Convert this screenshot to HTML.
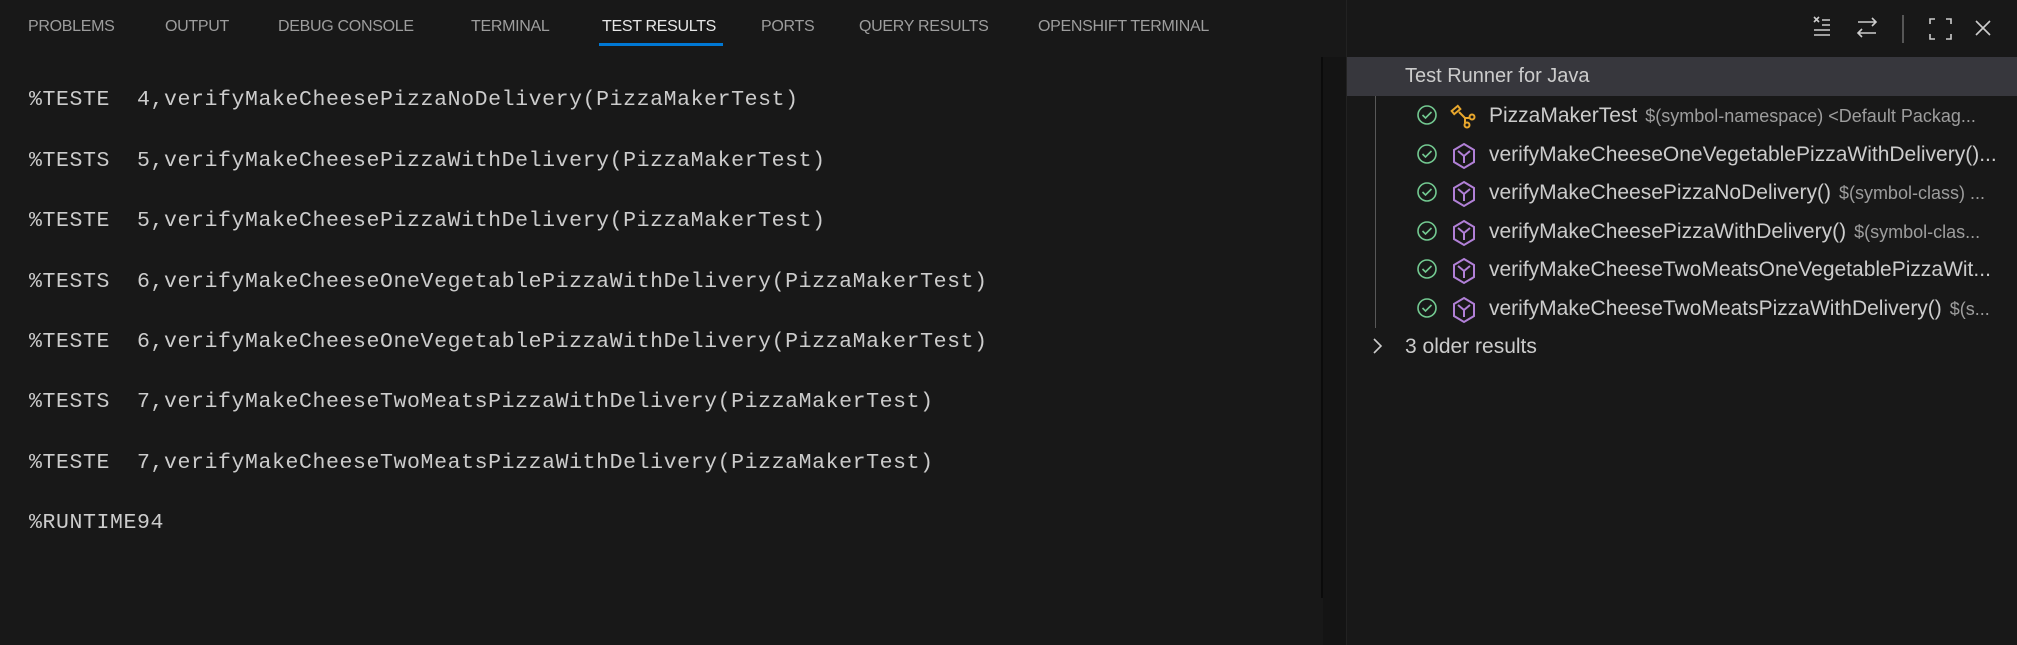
<!DOCTYPE html>
<html><head><meta charset="utf-8"><style>
body{margin:0;width:2017px;height:645px;background:#181818;overflow:hidden;position:relative;font-family:"Liberation Sans",sans-serif}
.tab{position:absolute;top:18px;font-size:16px;color:#9d9d9d;white-space:nowrap;letter-spacing:-0.3px}
.code{position:absolute;left:29px;font-family:"Liberation Mono",monospace;font-size:21.5px;color:#cccccc;white-space:pre;line-height:26px;letter-spacing:0.6px}
.row{position:absolute;left:1346px;right:0;height:38px;font-size:21px;color:#cccccc;white-space:nowrap;overflow:hidden}
.row .t{position:absolute;left:143px;top:8px}
.row .d{color:#9d9d9d;font-size:18px;margin-left:8px}
.row svg{position:absolute;top:7px}
</style></head><body>
<div class="tab" style="left:28px">PROBLEMS</div>
<div class="tab" style="left:165px">OUTPUT</div>
<div class="tab" style="left:278px">DEBUG CONSOLE</div>
<div class="tab" style="left:471px">TERMINAL</div>
<div class="tab" style="left:602px;color:#e7e7e7">TEST RESULTS</div>
<div style="position:absolute;left:599px;top:43px;width:124px;height:3px;background:#0078d4"></div>
<div class="tab" style="left:761px">PORTS</div>
<div class="tab" style="left:859px">QUERY RESULTS</div>
<div class="tab" style="left:1038px">OPENSHIFT TERMINAL</div>

<svg style="position:absolute;left:1808px;top:14px" width="200" height="30" viewBox="0 0 200 30" fill="none" stroke="#cccccc" stroke-width="1.6">
<path d="M6 3l5 5M11 3l-5 5M14 6h8M14 11h8M6 16h16M6 21h16"/>
<path d="M50 8h18M64 4l4 4-4 4M68 19H50M54 15l-4 4 4 4"/>
<path d="M95 1v28" stroke="#666"/>
<path d="M122 10V5h5M138 5h5v5M143 20v5h-5M127 25h-5v-5"/>
<path d="M168 7l14 14M182 7l-14 14"/>
</svg>

<div class="code" style="top:87px">%TESTE  4,verifyMakeCheesePizzaNoDelivery(PizzaMakerTest)</div>
<div class="code" style="top:148px">%TESTS  5,verifyMakeCheesePizzaWithDelivery(PizzaMakerTest)</div>
<div class="code" style="top:208px">%TESTE  5,verifyMakeCheesePizzaWithDelivery(PizzaMakerTest)</div>
<div class="code" style="top:269px">%TESTS  6,verifyMakeCheeseOneVegetablePizzaWithDelivery(PizzaMakerTest)</div>
<div class="code" style="top:329px">%TESTE  6,verifyMakeCheeseOneVegetablePizzaWithDelivery(PizzaMakerTest)</div>
<div class="code" style="top:389px">%TESTS  7,verifyMakeCheeseTwoMeatsPizzaWithDelivery(PizzaMakerTest)</div>
<div class="code" style="top:450px">%TESTE  7,verifyMakeCheeseTwoMeatsPizzaWithDelivery(PizzaMakerTest)</div>
<div class="code" style="top:510px">%RUNTIME94</div>

<div style="position:absolute;left:1321px;top:57px;width:2px;height:541px;background:#0b0b0b"></div>
<div style="position:absolute;left:1323px;top:57px;width:23px;height:588px;background:#141414"></div>
<div style="position:absolute;left:1346px;top:0;width:1px;height:645px;background:#222"></div>
<div style="position:absolute;left:1347px;top:57px;right:0;height:39px;background:#37373d"></div>
<div style="position:absolute;left:1405px;top:65px;font-size:20px;color:#cccccc">Test Runner for Java</div>
<div style="position:absolute;left:1375px;top:96px;width:1px;height:232px;background:#585858"></div>

<div class="row" style="top:96px">
<svg style="left:69px" width="24" height="24" viewBox="0 0 24 24" fill="none" stroke="#73c991" stroke-width="1.6"><circle cx="12" cy="12" r="9"/><path d="M7.5 12l3 3 6-6"/></svg>
<svg style="left:103px" width="30" height="26" viewBox="0 0 30 26" fill="none" stroke="#e8a72d" stroke-width="2"><rect x="3" y="5" width="8" height="4" transform="rotate(-40 7 7)"/><path d="M10 9l6 6h4M16 15v5"/><circle cx="23" cy="14" r="2.5"/><circle cx="18" cy="22" r="2.5"/></svg>
<span class="t">PizzaMakerTest<span class="d">$(symbol-namespace) &lt;Default Packag...</span></span></div>

<div class="row" style="top:135px">
<svg style="left:69px" width="24" height="24" viewBox="0 0 24 24" fill="none" stroke="#73c991" stroke-width="1.6"><circle cx="12" cy="12" r="9"/><path d="M7.5 12l3 3 6-6"/></svg>
<svg style="left:105px" width="26" height="28" viewBox="0 0 26 28" fill="none" stroke="#b180d7" stroke-width="2"><path d="M13 2l10 6v12l-10 6-10-6V8z"/><path d="M7 9l6 5 6-5M13 14v7"/></svg>
<span class="t">verifyMakeCheeseOneVegetablePizzaWithDelivery()...</span></div>

<div class="row" style="top:173px">
<svg style="left:69px" width="24" height="24" viewBox="0 0 24 24" fill="none" stroke="#73c991" stroke-width="1.6"><circle cx="12" cy="12" r="9"/><path d="M7.5 12l3 3 6-6"/></svg>
<svg style="left:105px" width="26" height="28" viewBox="0 0 26 28" fill="none" stroke="#b180d7" stroke-width="2"><path d="M13 2l10 6v12l-10 6-10-6V8z"/><path d="M7 9l6 5 6-5M13 14v7"/></svg>
<span class="t">verifyMakeCheesePizzaNoDelivery()<span class="d">$(symbol-class) ...</span></span></div>

<div class="row" style="top:212px">
<svg style="left:69px" width="24" height="24" viewBox="0 0 24 24" fill="none" stroke="#73c991" stroke-width="1.6"><circle cx="12" cy="12" r="9"/><path d="M7.5 12l3 3 6-6"/></svg>
<svg style="left:105px" width="26" height="28" viewBox="0 0 26 28" fill="none" stroke="#b180d7" stroke-width="2"><path d="M13 2l10 6v12l-10 6-10-6V8z"/><path d="M7 9l6 5 6-5M13 14v7"/></svg>
<span class="t">verifyMakeCheesePizzaWithDelivery()<span class="d">$(symbol-clas...</span></span></div>

<div class="row" style="top:250px">
<svg style="left:69px" width="24" height="24" viewBox="0 0 24 24" fill="none" stroke="#73c991" stroke-width="1.6"><circle cx="12" cy="12" r="9"/><path d="M7.5 12l3 3 6-6"/></svg>
<svg style="left:105px" width="26" height="28" viewBox="0 0 26 28" fill="none" stroke="#b180d7" stroke-width="2"><path d="M13 2l10 6v12l-10 6-10-6V8z"/><path d="M7 9l6 5 6-5M13 14v7"/></svg>
<span class="t">verifyMakeCheeseTwoMeatsOneVegetablePizzaWit...</span></div>

<div class="row" style="top:289px">
<svg style="left:69px" width="24" height="24" viewBox="0 0 24 24" fill="none" stroke="#73c991" stroke-width="1.6"><circle cx="12" cy="12" r="9"/><path d="M7.5 12l3 3 6-6"/></svg>
<svg style="left:105px" width="26" height="28" viewBox="0 0 26 28" fill="none" stroke="#b180d7" stroke-width="2"><path d="M13 2l10 6v12l-10 6-10-6V8z"/><path d="M7 9l6 5 6-5M13 14v7"/></svg>
<span class="t">verifyMakeCheeseTwoMeatsPizzaWithDelivery()<span class="d">$(s...</span></span></div>

<div class="row" style="top:327px">
<svg style="left:24px;top:10px" width="14" height="18" viewBox="0 0 14 18" fill="none" stroke="#cccccc" stroke-width="1.6"><path d="M4 2l7 7-7 7"/></svg>
<span class="t" style="left:59px">3 older results</span></div>
</body></html>
